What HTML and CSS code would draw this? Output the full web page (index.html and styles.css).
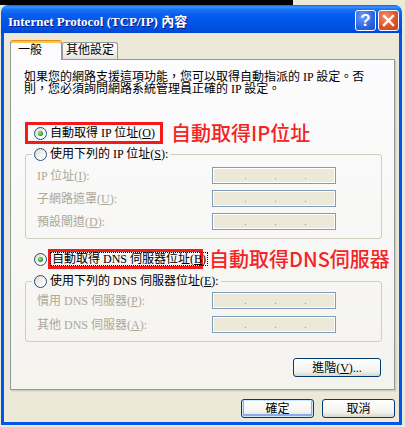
FILE: index.html
```html
<!DOCTYPE html>
<html lang="zh-Hant">
<head>
<meta charset="utf-8">
<title>Internet Protocol (TCP/IP) 內容</title>
<link rel="stylesheet" href="styles.css">
</head>
<body>
<div class="window">
  <div class="titlebar">
    <span class="title">Internet Protocol (TCP/IP) 內容</span>
    <span class="cbtn help">?</span>
    <span class="cbtn close"><svg width="13" height="13" viewBox="0 0 13 13"><path d="M2 2 L11 11 M11 2 L2 11" stroke="#fff" stroke-width="2.4" stroke-linecap="square"/></svg></span>
  </div>
  <div class="frame">
    <div class="tabs">
      <div class="tab active">一般</div>
      <div class="tab">其他設定</div>
    </div>
    <div class="panel">
      <p class="desc">如果您的網路支援這項功能，您可以取得自動指派的 IP 設定。否<br>則，您必須詢問網路系統管理員正確的 IP 設定。</p>

      <div class="note-row ip-row">
        <label class="opt box box-ip"><span class="radio checked"></span>自動取得 IP 位址(<u>O</u>)</label>
        <span class="note">自動取得IP位址</span>
      </div>

      <fieldset class="group group-ip">
        <legend><label class="opt"><span class="radio"></span>使用下列的 IP 位址(<u>S</u>):</label></legend>
        <div class="fields">
          <span class="flabel">IP 位址(<u>I</u>):</span><span class="ip"><i></i><i></i><i></i></span>
          <span class="flabel">子網路遮罩(<u>U</u>):</span><span class="ip"><i></i><i></i><i></i></span>
          <span class="flabel">預設閘道(<u>D</u>):</span><span class="ip"><i></i><i></i><i></i></span>
        </div>
      </fieldset>

      <div class="note-row dns-row">
        <span class="radio checked"></span>
        <label class="opt box box-dns"><span class="focus">自動取得 DNS 伺服器位址(<u>B</u>)</span></label>
        <span class="note note-dns">自動取得DNS伺服器</span>
      </div>

      <fieldset class="group group-dns">
        <legend><label class="opt"><span class="radio"></span>使用下列的 DNS 伺服器位址(<u>E</u>):</label></legend>
        <div class="fields">
          <span class="flabel">慣用 DNS 伺服器(<u>P</u>):</span><span class="ip"><i></i><i></i><i></i></span>
          <span class="flabel">其他 DNS 伺服器(<u>A</u>):</span><span class="ip"><i></i><i></i><i></i></span>
        </div>
      </fieldset>

      <button class="btn adv">進階(<u>V</u>)...</button>
    </div>
    <div class="footer">
      <button class="btn default">確定</button>
      <button class="btn">取消</button>
    </div>
  </div>
</div>
</body>
</html>
```
FILE: styles.css
```css
* { box-sizing: border-box; }
html, body { margin: 0; padding: 0; }
body {
  width: 405px;
  height: 427px;
  overflow: hidden;
  background: linear-gradient(#000, #000) no-repeat 0 0 / 293px 5px, #ECE9D8;
  font: 12px/14px "Liberation Serif", "Noto Sans CJK TC", serif;
  color: #000;
}

.window {
  margin: 5px 0 0 1px;
  width: 401px;
  height: 420px;
  display: flex;
  flex-direction: column;
}

.titlebar {
  height: 28px;
  flex: none;
  display: flex;
  align-items: flex-start;
  gap: 2px;
  padding: 0 3px 0 7px;
  border-radius: 7px 7px 0 0;
  background: linear-gradient(#0A5DF0 0, #3D95FF 2px, #1D74F8 4px, #0860F0 9px, #0055E8 60%, #0050E0 85%, #0044D0 100%);
}
.title {
  flex: 1;
  padding-top: 5px;
  line-height: 23px;
  color: #fff;
  font-weight: bold;
  font-size: 13px;
  white-space: nowrap;
  text-shadow: 1px 1px #0A1883;
}
.cbtn {
  margin-top: 5px;
  width: 21px;
  height: 21px;
  border: 1px solid #fff;
  border-radius: 3px;
  display: flex;
  align-items: center;
  justify-content: center;
}
.help {
  background: radial-gradient(circle at 35% 30%, #6E9DF8, #2F63E0 60%, #2150CC);
  color: #fff;
  font: bold 17px "Liberation Sans", sans-serif;
  line-height: 19px;
}
.close {
  background: radial-gradient(circle at 35% 30%, #F0926E, #E0522E 55%, #C8401E);
}

.frame {
  flex: 1;
  display: flex;
  flex-direction: column;
  background: #ECE9D8;
  border: 3px solid #0055EA;
  border-top: 0;
  padding: 7px 4px 4px 6px;
}

.tabs {
  height: 19px;
  flex: none;
  display: flex;
  align-items: flex-end;
  position: relative;
  z-index: 1;
}
.tab {
  height: 17px;
  padding: 0 3px;
  border: 1px solid #919B9C;
  border-bottom: 0;
  border-radius: 3px 3px 0 0;
  background: linear-gradient(#FFFFFF, #F3F2EC 60%, #E4E2D8);
  line-height: 15px;
  white-space: nowrap;
}
.tab.active {
  width: 52px;
  height: 20px;
  margin-bottom: -1px;
  padding: 0 0 0 7px;
  border-top: 1px solid #E68B2C;
  box-shadow: inset 0 2px 0 #FFC73C;
  background: #FCFCFE;
  line-height: 19px;
}

.panel {
  height: 331px;
  flex: none;
  display: flex;
  flex-direction: column;
  border: 1px solid #919B9C;
  background: linear-gradient(#FCFCFE, #F4F3EE);
  box-shadow: 1px 1px 0 #D0CEBF, 2px 2px 0 #E0DDCE;
  padding: 0 12px 0 14px;
}

.desc {
  margin: 11px 0 0 -1px;
  line-height: 12px;
  white-space: nowrap;
}

.opt {
  display: flex;
  align-items: center;
  white-space: nowrap;
  line-height: 14px;
}
.radio {
  flex: none;
  width: 13px;
  height: 13px;
  margin-right: 3px;
  border: 1px solid #1C5180;
  border-radius: 50%;
  background: linear-gradient(135deg, #DCD9CD, #FFFFFF 80%);
  display: flex;
  align-items: center;
  justify-content: center;
}
.radio.checked::after {
  content: "";
  width: 5px;
  height: 5px;
  border-radius: 50%;
  background: radial-gradient(circle at 40% 40%, #A0EEA0, #21A121 60%, #1A8A1A);
}

.note-row {
  display: flex;
  align-items: center;
}
.ip-row { margin-top: 27px; }
.box {
  height: 22px;
  border: 3px solid #F31A1A;
}
.box-ip {
  width: 138px;
  padding-left: 6px;
}
.note {
  margin-left: 8px;
  color: #F42424;
  font: 500 20px "Noto Sans CJK TC", sans-serif;
  line-height: 22px;
  white-space: nowrap;
}

.group {
  margin: 3px 0 0 0;
  width: 357px;
  padding: 5px 0 8px 11px;
  border: 1px solid #D0D0BF;
  border-radius: 3px;
  min-width: 0;
}
.group legend {
  padding: 0 2px;
  margin-left: -5px;
}
.group-dns { margin-top: 4px; padding-top: 4px; padding-bottom: 8px; }

.fields {
  display: grid;
  grid-template-columns: 175px 124px;
  grid-auto-rows: 17px;
  row-gap: 7px;
  align-items: center;
}
.group-ip .fields { row-gap: 6px; padding-top: 1px; }
.flabel {
  color: #ACA899;
  white-space: nowrap;
  line-height: 14px;
}
.ip {
  height: 17px;
  border: 1px solid #7F9DB9;
  box-shadow: inset 0 0 0 1px #fff;
  background: #ECE9D8;
  display: flex;
  gap: 29px;
  padding: 10px 0 0 32px;
}
.ip i {
  width: 1px;
  height: 1px;
  background: #9A9888;
}

.dns-row { margin-top: 9px; }
.dns-row > .radio { margin-left: 9px; margin-right: 1px; }
.box-dns {
  width: 155px;
  height: 20px;
  padding-left: 0;
}
.focus {
  outline: 1px dotted #000;
  line-height: 12px;
  padding: 0 1px;
}
.note-dns { margin-left: 6px; }

.btn {
  font: 12px "Liberation Serif", "Noto Sans CJK TC", serif;
  height: 19px;
  padding: 0;
  border: 1px solid #003C74;
  border-radius: 3px;
  background: linear-gradient(#FFFFFF, #F4F3EE 70%, #DCD7CB);
  color: #000;
  line-height: 16px;
}
.adv {
  width: 88px;
  margin-top: 16px;
  align-self: flex-end;
  margin-right: 1px;
}

.footer {
  display: flex;
  justify-content: flex-end;
  gap: 8px;
  margin-top: 9px;
}
.footer .btn { width: 73px; }
.btn.default {
  box-shadow: inset 0 0 0 1px #CEE7FF, inset 0 -1px 0 2px #89ADE4;
}
```
